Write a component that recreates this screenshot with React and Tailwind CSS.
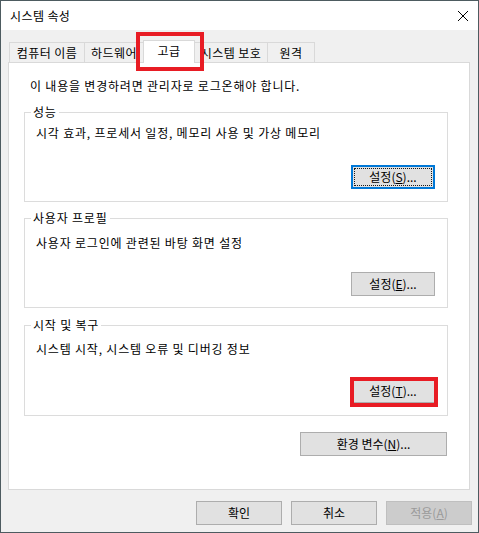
function Btn({ children, className = "" }) {
  return (
    <div
      className={`flex h-[24px] items-center justify-center border border-[#adadad] bg-[#e1e1e1] ${className}`}
    >
      {children}
    </div>
  );
}

function Group({ label, text, pt, btnTop, height, className = "", button }) {
  return (
    <div
      className={`relative ml-[15px] flex w-[424px] flex-col border border-[#dcdcdc] ${height} ${className}`}
    >
      <span className="absolute left-[6px] top-[-9px] bg-white px-[2px]">{label}</span>
      <p className={`pl-[11px] ${pt}`}>{text}</p>
      <div className={`mr-[12px] self-end ${btnTop}`}>{button}</div>
    </div>
  );
}

export default function App() {
  return (
    <div className="relative h-[533px] w-[479px] border border-[#4d5b60] bg-[#f0f0f0] font-['Noto_Sans_CJK_KR',sans-serif] text-[12px] leading-[16px] tracking-[0.8px] text-black">
      {/* title bar */}
      <div className="flex h-[29px] items-center justify-between bg-white pl-[9px] pr-[10px]">
        <span className="tracking-[0.4px]">시스템 속성</span>
        <svg width="10" height="10" viewBox="0 0 10 10">
          <path d="M0 0L10 10M10 0L0 10" stroke="#000" strokeWidth="1" />
        </svg>
      </div>

      {/* tabs */}
      <div className="mt-[10px] flex h-[22px] items-end pl-[8px] tracking-[0.4px]">
        <div className="flex h-[20px] w-[76px] items-center justify-center border-l border-r border-t border-[#d9d9d9]">
          컴퓨터 이름
        </div>
        <div className="flex h-[20px] w-[58px] items-center justify-center border-t border-[#d9d9d9]">
          하드웨어
        </div>
        <div className="relative z-10 -mb-px flex h-[23px] w-[52px] items-start justify-center border-l border-r border-t border-[#d9d9d9] bg-white pt-[2px]">
          고급
        </div>
        <div className="flex h-[20px] w-[73px] items-center justify-center border-t border-r border-[#d9d9d9]">
          시스템 보호
        </div>
        <div className="flex h-[20px] w-[47px] items-center justify-center border-t border-r border-[#d9d9d9]">
          원격
        </div>
      </div>

      {/* panel */}
      <div className="ml-[7px] h-[428px] w-[462px] border border-[#d9d9d9] bg-white">
        <p className="ml-[21px] mt-[15px]">이 내용을 변경하려면 관리자로 로그온해야 합니다.</p>

        <Group
          className="mt-[18px]"
          height="h-[90px]"
          label="성능"
          text="시각 효과, 프로세서 일정, 메모리 사용 및 가상 메모리"
          pt="pt-[12px]"
          btnTop="mt-[24px]"
          button={
            <div className="relative flex h-[24px] w-[84px] items-center justify-center border-2 border-[#0078d7] bg-[#e1e1e1] tracking-normal">
              <span className="absolute inset-[1px] border border-dotted border-[#1a1a1a]" />
              설정(<u>S</u>)...
            </div>
          }
        />

        <Group
          className="mt-[16px]"
          height="h-[90px]"
          label="사용자 프로필"
          text="사용자 로그인에 관련된 바탕 화면 설정"
          pt="pt-[16px]"
          btnTop="mt-[21px]"
          button={
            <Btn className="w-[84px] tracking-normal">
              설정(<u>E</u>)...
            </Btn>
          }
        />

        <Group
          className="mt-[17px]"
          height="h-[91px]"
          label="시작 및 복구"
          text="시스템 시작, 시스템 오류 및 디버깅 정보"
          pt="pt-[15px]"
          btnTop="mt-[22px]"
          button={
            <Btn className="w-[84px] tracking-normal">
              설정(<u>T</u>)...
            </Btn>
          }
        />

        <Btn className="ml-[291px] mt-[16px] w-[147px] tracking-normal">
          환경 변수(<u>N</u>)...
        </Btn>
      </div>

      {/* dialog buttons */}
      <div className="mt-[11px] flex justify-end gap-[9px] pr-[6px] tracking-normal">
        <Btn className="w-[86px]">확인</Btn>
        <Btn className="w-[86px]">취소</Btn>
        <div className="flex h-[24px] w-[86px] items-center justify-center border border-[#bfbfbf] bg-[#cccccc] text-[#9a9a9a]">
          적용(<u>A</u>)
        </div>
      </div>

      {/* red highlight marks */}
      <div className="absolute left-[135px] top-[31px] h-[39px] w-[68px] border-4 border-[#e81c24]" />
      <div className="absolute left-[349px] top-[376px] h-[30px] w-[88px] border-4 border-[#e81c24]" />
    </div>
  );
}
